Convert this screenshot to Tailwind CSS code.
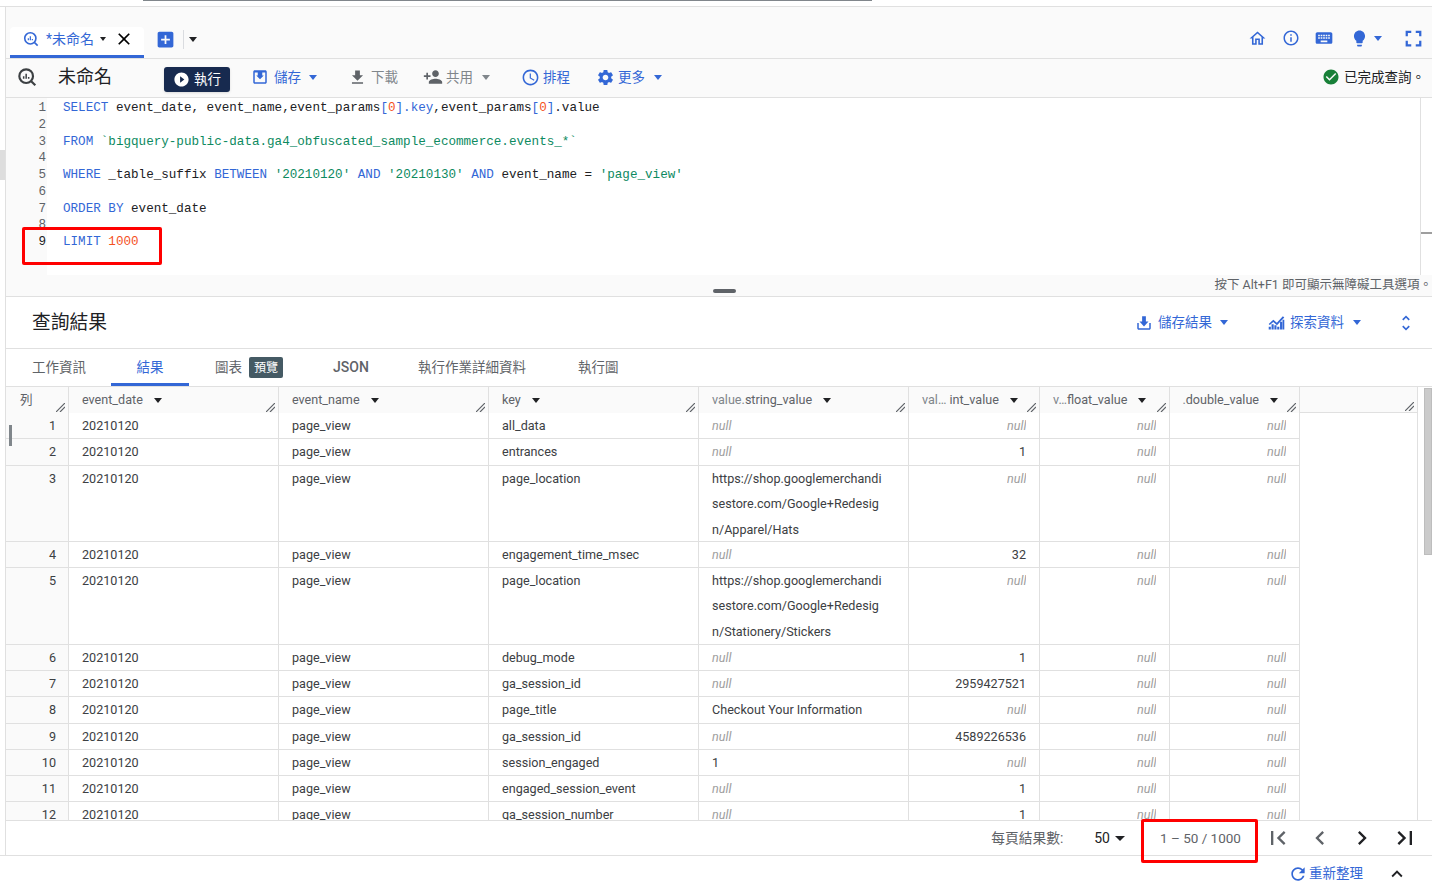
<!DOCTYPE html>
<html lang="zh-Hant">
<head>
  <meta charset="UTF-8" />
  <title>BigQuery</title>
  <script src="https://cdn.jsdelivr.net/npm/@tailwindcss/browser@4"></script>
</head>
<body class="relative w-[1432px] h-[889px] overflow-hidden bg-white text-[#3c4043] font-['Roboto','Noto_Sans_CJK_TC',sans-serif] text-[13px]">

  <!-- top strip -->
  <div class="h-[7px] border-b border-[#e0e0e0]">
    <div class="ml-[143px] w-[729px] h-px bg-[#80868b]"></div>
  </div>

  <div class="ml-[5px] border-l border-[#e0e0e0]">

    <!-- tab bar -->
    <div class="h-[52px] bg-[#fafafa] border-b border-[#e0e0e0] flex items-end pl-1 pr-[5px]">
      <div class="w-[134px] h-[31px] bg-white rounded-t border-b-[3px] border-[#3367d6] flex items-center pl-[13px] pb-[4px] text-[#3367d6]">
        <svg class="w-[16px] h-[16px]" viewBox="0 0 24 24" fill="none" stroke="currentColor" stroke-width="2.4"><circle cx="11" cy="11" r="8.4"/><path d="M17 17l5 5"/><path d="M8 14v-3M11 14V8M14 14v-2" stroke-width="1.8"/></svg>
        <span class="ml-[7px] w-[49px] text-[14px]">*未命名</span>
        <span class="ml-[5px] w-0 h-0 border-x-[3.5px] border-x-transparent border-t-[4px] border-t-[#202124]"></span>
        <svg class="ml-[8px] w-[20px] h-[20px] text-black" viewBox="0 0 24 24" fill="currentColor"><path d="M19 6.41L17.59 5 12 10.59 6.41 5 5 6.41 10.59 12 5 17.59 6.41 19 12 13.41 17.59 19 19 17.59 13.41 12z"/></svg>
      </div>
      <div class="flex items-center h-[31px] mb-[3px] ml-[11px]">
        <svg class="w-[21px] h-[21px] text-[#3367d6]" viewBox="0 0 24 24" fill="currentColor"><path d="M19 3H5c-1.11 0-2 .9-2 2v14c0 1.1.89 2 2 2h14c1.1 0 2-.9 2-2V5c0-1.1-.9-2-2-2zm-2 10h-4v4h-2v-4H7v-2h4V7h2v4h4v2z"/></svg>
        <span class="ml-[7px] w-px h-[19px] bg-[#dadce0]"></span>
        <span class="ml-[5px] w-0 h-0 border-x-[4.5px] border-x-transparent border-t-[5px] border-t-[#202124]"></span>
      </div>
      <div class="ml-auto flex items-center h-[38px] mb-[1px] text-[#3367d6]">
        <svg class="w-[19px] h-[19px]" viewBox="0 0 24 24" fill="currentColor"><path d="M12 5.69l5 4.5V18h-2v-6H9v6H7v-7.81l5-4.5M12 3L2 12h3v8h6v-6h2v6h6v-8h3L12 3z"/></svg>
        <svg class="ml-[14.500px] w-[18px] h-[18px]" viewBox="0 0 24 24" fill="currentColor"><path d="M11 7h2v2h-2zm0 4h2v6h-2zm1-9C6.48 2 2 6.48 2 12s4.48 10 10 10 10-4.48 10-10S17.52 2 12 2zm0 18c-4.41 0-8-3.59-8-8s3.59-8 8-8 8 3.59 8 8-3.59 8-8 8z"/></svg>
        <svg class="ml-[14px] w-[20px] h-[20px]" viewBox="0 0 24 24" fill="currentColor"><path d="M20 5H4c-1.1 0-1.99.9-1.99 2L2 17c0 1.1.9 2 2 2h16c1.1 0 2-.9 2-2V7c0-1.1-.9-2-2-2zm-9 3h2v2h-2V8zm0 3h2v2h-2v-2zM8 8h2v2H8V8zm0 3h2v2H8v-2zm-1 2H5v-2h2v2zm0-3H5V8h2v2zm9 7H8v-2h8v2zm0-4h-2v-2h2v2zm0-3h-2V8h2v2zm3 3h-2v-2h2v2zm0-3h-2V8h2v2z"/></svg>
        <svg class="ml-[16.500px] w-[19px] h-[19px]" viewBox="0 0 24 24" fill="currentColor"><path d="M9 21c0 .55.45 1 1 1h4c.55 0 1-.45 1-1v-1H9v1zm3-19C8.14 2 5 5.14 5 9c0 2.38 1.19 4.47 3 5.74V17c0 .55.45 1 1 1h6c.55 0 1-.45 1-1v-2.26c1.81-1.27 3-3.36 3-5.74 0-3.86-3.14-7-7-7z"/></svg>
        <span class="ml-[5px] w-0 h-0 border-x-[4.5px] border-x-transparent border-t-[5px] border-t-[#3367d6]"></span>
        <svg class="ml-[18px] w-[27px] h-[27px]" viewBox="0 0 24 24" fill="currentColor"><path d="M7 14H5v5h5v-2H7v-3zm-2-4h2V7h3V5H5v5zm12 7h-3v2h5v-5h-2v3zM14 5v2h3v3h2V5h-5z"/></svg>
      </div>
    </div>

    <!-- action bar -->
    <div class="h-[39px] bg-[#fafafa] border-b border-[#e0e0e0] flex items-center pl-[11px] pr-[7px] pb-[2px] text-[13.5px]">
      <svg class="w-[20px] h-[20px] text-[#3c4043]" viewBox="0 0 24 24" fill="none" stroke="currentColor" stroke-width="2.6"><circle cx="11" cy="11" r="8.2"/><path d="M17 17l5 5"/><path d="M8 14v-3M11 14V8M14 14v-2" stroke-width="1.8"/></svg>
      <span class="ml-[21px] w-[55px] text-[18px] leading-none text-[#202124]">未命名</span>
      <button class="ml-[51px] mt-[4px] w-[66px] h-[25px] rounded-[3px] bg-[#172a4f] text-white flex items-center pl-[9px] shadow-sm">
        <svg class="w-[17px] h-[17px]" viewBox="0 0 24 24" fill="currentColor"><path d="M12 2C6.48 2 2 6.48 2 12s4.48 10 10 10 10-4.48 10-10S17.52 2 12 2zm-2 14.5v-9l6 4.5-6 4.5z"/></svg>
        <span class="ml-[4px]">執行</span>
      </button>
      <svg class="ml-[21px] w-[18px] h-[18px] text-[#3367d6]" viewBox="0 0 24 24" fill="currentColor"><path d="M19 3H5c-1.1 0-2 .9-2 2v14c0 1.1.9 2 2 2h14c1.1 0 2-.9 2-2V5c0-1.1-.9-2-2-2zm0 16H5V6h4v4H7l5 5 5-5h-2V6h4v13z"/></svg>
      <span class="ml-[5px] w-[27px] text-[#3367d6]">儲存</span>
      <span class="ml-[8px] w-0 h-0 border-x-[4.5px] border-x-transparent border-t-[5px] border-t-[#3367d6]"></span>
      <svg class="ml-[31px] w-[19px] h-[19px] text-[#5f6368]" viewBox="0 0 24 24" fill="currentColor"><path d="M19 9h-4V3H9v6H5l7 7 7-7zM5 18v2h14v-2H5z"/></svg>
      <span class="ml-[4px] w-[27px] text-[#80868b]">下載</span>
      <svg class="ml-[25px] w-[20px] h-[20px] text-[#5f6368]" viewBox="0 0 24 24" fill="currentColor"><path d="M15 12c2.21 0 4-1.79 4-4s-1.79-4-4-4-4 1.79-4 4 1.79 4 4 4zm-9-2V7H4v3H1v2h3v3h2v-3h3v-2H6zm9 4c-2.67 0-8 1.34-8 4v2h16v-2c0-2.66-5.33-4-8-4z"/></svg>
      <span class="ml-[3px] w-[28px] text-[#80868b]">共用</span>
      <span class="ml-[8px] w-0 h-0 border-x-[4.5px] border-x-transparent border-t-[5px] border-t-[#80868b]"></span>
      <svg class="ml-[31px] w-[19px] h-[19px] text-[#3367d6]" viewBox="0 0 24 24" fill="currentColor"><path d="M11.99 2C6.47 2 2 6.48 2 12s4.47 10 9.99 10C17.52 22 22 17.52 22 12S17.52 2 11.99 2zM12 20c-4.42 0-8-3.58-8-8s3.58-8 8-8 8 3.58 8 8-3.58 8-8 8zm.5-13H11v6l5.25 3.15.75-1.23-4.5-2.67z"/></svg>
      <span class="ml-[3px] w-[28px] text-[#3367d6]">排程</span>
      <svg class="ml-[25px] w-[19px] h-[19px] text-[#3367d6]" viewBox="0 0 24 24" fill="currentColor"><path d="M19.14 12.94c.04-.3.06-.61.06-.94 0-.32-.02-.64-.07-.94l2.03-1.58a.49.49 0 0 0 .12-.61l-1.92-3.32a.488.488 0 0 0-.59-.22l-2.39.96c-.5-.38-1.03-.7-1.62-.94l-.36-2.54a.484.484 0 0 0-.48-.41h-3.84c-.24 0-.43.17-.47.41l-.36 2.54c-.59.24-1.13.57-1.62.94l-2.39-.96c-.22-.08-.47 0-.59.22L2.74 8.87c-.12.21-.08.47.12.61l2.03 1.58c-.05.3-.09.63-.09.94s.02.64.07.94l-2.03 1.58a.49.49 0 0 0-.12.61l1.92 3.32c.12.22.37.29.59.22l2.39-.96c.5.38 1.03.7 1.62.94l.36 2.54c.05.24.24.41.48.41h3.84c.24 0 .44-.17.47-.41l.36-2.54c.59-.24 1.13-.56 1.62-.94l2.39.96c.22.08.47 0 .59-.22l1.92-3.32c.12-.22.07-.47-.12-.61l-2.01-1.58zM12 15.6c-1.98 0-3.6-1.62-3.6-3.6s1.62-3.6 3.6-3.6 3.6 1.62 3.6 3.6-1.62 3.6-3.6 3.6z"/></svg>
      <span class="ml-[3px] w-[28px] text-[#3367d6]">更多</span>
      <span class="ml-[8px] w-0 h-0 border-x-[4.5px] border-x-transparent border-t-[5px] border-t-[#3367d6]"></span>
      <svg class="ml-auto w-[18px] h-[18px] text-[#188038]" viewBox="0 0 24 24" fill="currentColor"><path d="M12 2C6.48 2 2 6.48 2 12s4.48 10 10 10 10-4.48 10-10S17.52 2 12 2zm-2 15l-5-5 1.41-1.41L10 14.17l7.59-7.59L19 8l-9 9z"/></svg>
      <span class="ml-[4px] text-[#202124]">已完成查詢。</span>
    </div>

    <!-- editor -->
    <div class="h-[177px] flex">
      <pre class="w-[41px] shrink-0 bg-[#fafafa] text-right pr-[1px] pt-[2px] font-['Liberation_Mono',monospace] text-[12.6px] leading-[16.75px] text-[#5f6368]">1
2
3
4
5
6
7
8
<span class="text-[#202124]">9</span></pre>
      <pre class="flex-1 pl-[16px] pt-[2px] font-['Liberation_Mono',monospace] text-[12.6px] leading-[16.75px] text-[#202124]"><span class="text-[#3367d6]">SELECT</span> event_date, event_name,event_params<span class="text-[#3367d6]">[</span><span class="text-[#f4511e]">0</span><span class="text-[#3367d6]">].key</span>,event_params<span class="text-[#3367d6]">[</span><span class="text-[#f4511e]">0</span><span class="text-[#3367d6]">]</span>.value

<span class="text-[#3367d6]">FROM</span> <span class="text-[#0d8a5f]">`bigquery-public-data.ga4_obfuscated_sample_ecommerce.events_*`</span>

<span class="text-[#3367d6]">WHERE</span> _table_suffix <span class="text-[#3367d6]">BETWEEN</span> <span class="text-[#0d8a5f]">'20210120'</span> <span class="text-[#3367d6]">AND</span> <span class="text-[#0d8a5f]">'20210130'</span> <span class="text-[#3367d6]">AND</span> event_name = <span class="text-[#0d8a5f]">'page_view'</span>

<span class="text-[#3367d6]">ORDER BY</span> event_date

<span class="text-[#3367d6]">LIMIT</span> <span class="text-[#f4511e]">1000</span></pre>
      <div class="w-[12px] shrink-0 border-l border-[#e0e0e0] pt-[134px]">
        <div class="h-[2px] bg-[#9e9e9e]"></div>
      </div>
    </div>

    <!-- editor footer -->
    <div class="relative h-[22px] bg-[#fafafa] border-b border-[#e0e0e0] flex items-center justify-end text-[12.5px] text-[#5f6368]">
      按下 Alt+F1 即可顯示無障礙工具選項。
      <span class="absolute left-[707px] top-[14px] w-[23px] h-[4px] rounded-sm bg-[#5f6368]"></span>
    </div>

    <!-- results header -->
    <div class="h-[52px] border-b border-[#e0e0e0] flex items-center pl-[26px] pr-[16px] text-[#3367d6]">
      <span class="text-[18.75px] text-[#202124] pt-[2px]">查詢結果</span>
      <svg class="ml-auto w-[18px] h-[18px]" viewBox="0 0 24 24" fill="currentColor"><path d="M19 12v7H5v-7H3v7c0 1.1.9 2 2 2h14c1.1 0 2-.9 2-2v-7h-2zM14.5 3h-5v7H6l6 6.5 6-6.5h-3.5z"/></svg>
      <span class="ml-[5px] w-[54px] text-[13.5px]">儲存結果</span>
      <span class="ml-[8px] w-0 h-0 border-x-[4.5px] border-x-transparent border-t-[5px] border-t-[#3367d6]"></span>
      <svg class="ml-[40px] w-[17px] h-[17px]" viewBox="0 0 24 24" fill="currentColor"><path d="M1 14l6.5-6 5 4.500L21 3l2 2-10.300 11-5.200-4.800L2.500 15.500z"/><path d="M1 18h3v4H1zM5 14.500h3V22H5zM9 16h3v6H9zM13 18h3v4h-3zM17 11h3v11h-3zM20.500 8H23v14h-2.500z"/></svg>
      <span class="ml-[5px] w-[55px] text-[13.5px]">探索資料</span>
      <span class="ml-[8px] w-0 h-0 border-x-[4.5px] border-x-transparent border-t-[5px] border-t-[#3367d6]"></span>
      <svg class="ml-[35px] w-[20px] h-[20px]" viewBox="0 0 24 24" fill="currentColor"><path d="M12 5.83L15.17 9l1.41-1.41L12 3 7.41 7.59 8.83 9 12 5.83zm0 12.34L8.83 15l-1.41 1.41L12 21l4.59-4.59L15.17 15 12 18.17z"/></svg>
    </div>

    <!-- result tabs -->
    <div class="h-[38px] border-b border-[#e0e0e0] flex items-center text-[13.5px] text-[#5f6368]">
      <span class="ml-[26px] w-[54px]">工作資訊</span>
      <span class="ml-[25px] w-[78px] h-full flex items-center justify-center text-[#3367d6] border-b-[3px] border-[#3367d6] pt-[2px]">結果</span>
      <span class="ml-[26px] w-[27px]">圖表</span>
      <span class="ml-[7px] w-[34px] h-[21px] rounded-[2px] bg-[#455a64] text-white text-[12px] flex items-center justify-center">預覽</span>
      <span class="ml-[50px] w-[35px] font-medium text-[14px]">JSON</span>
      <span class="ml-[50px] w-[109px]">執行作業詳細資料</span>
      <span class="ml-[51px]">執行圖</span>
    </div>

    <!-- table -->
    <div class="h-[433px] flex">
      <div id="table" class="w-[1294px] shrink-0 h-full overflow-hidden"></div>
      <div class="w-[118px] shrink-0 h-full border-r border-[#e0e0e0]">
        <div class="relative h-[26px] bg-[#fafafa] border-b border-[#e0e0e0]">
          <svg class="absolute right-[3px] bottom-[1px] w-[9px] h-[9px] text-[#5f6368]" viewBox="0 0 9 9" fill="none" stroke="currentColor" stroke-width="1.2"><path d="M0 9l9-9M4 9l5-5"/></svg>
        </div>
      </div>
      <div class="flex-1 pl-[6px] pt-px">
        <div class="h-[167px] bg-[#cbcbcb] border border-[#bdbdbd]"></div>
      </div>
    </div>

    <!-- pager -->
    <div class="h-[36px] border-y border-[#e0e0e0] flex items-center pr-[13px] text-[#5f6368]">
      <span class="ml-auto text-[13.75px]">每頁結果數:</span>
      <span class="ml-[31px] text-[14px] text-[#202124]">50</span>
      <span class="ml-[5px] w-0 h-0 border-x-[5px] border-x-transparent border-t-[5px] border-t-[#202124]"></span>
      <span class="ml-[35px] w-[81px] text-[13.5px] whitespace-nowrap">1 – 50 / 1000</span>
      <svg class="ml-[23px] w-[28px] h-[28px] text-[#5f6368]" viewBox="0 0 24 24" fill="currentColor"><path d="M18.41 16.59L13.82 12l4.59-4.59L17 6l-6 6 6 6zM6 6h2v12H6z"/></svg>
      <svg class="ml-[14px] w-[28px] h-[28px] text-[#5f6368]" viewBox="0 0 24 24" fill="currentColor"><path d="M15.41 7.41L14 6l-6 6 6 6 1.41-1.41L10.83 12z"/></svg>
      <svg class="ml-[14px] w-[28px] h-[28px] text-[#202124]" viewBox="0 0 24 24" fill="currentColor"><path d="M10 6L8.59 7.41 13.17 12l-4.58 4.59L10 18l6-6z"/></svg>
      <svg class="ml-[15px] w-[28px] h-[28px] text-[#202124]" viewBox="0 0 24 24" fill="currentColor"><path d="M5.59 7.41L10.18 12l-4.59 4.59L7 18l6-6-6-6zM16 6h2v12h-2z"/></svg>
    </div>
  </div>

  <!-- bottom bar -->
  <div class="h-[33px] border-t border-[#e0e0e0] -mt-px flex items-center justify-end pr-[24px] pt-[3px] text-[#3367d6]">
    <svg class="w-[20px] h-[20px]" viewBox="0 0 24 24" fill="currentColor"><path d="M17.65 6.35C16.2 4.9 14.21 4 12 4c-4.42 0-7.99 3.58-7.99 8s3.57 8 7.99 8c3.73 0 6.84-2.55 7.73-6h-2.08c-.82 2.33-3.04 4-5.65 4-3.31 0-6-2.69-6-6s2.69-6 6-6c1.66 0 3.14.69 4.22 1.78L13 11h7V4l-2.35 2.35z"/></svg>
    <span class="ml-[1px] w-[54px] text-[13.5px]">重新整理</span>
    <svg class="ml-[23px] w-[22px] h-[22px] text-[#202124]" viewBox="0 0 24 24" fill="currentColor"><path d="M12 8l-6 6 1.41 1.41L12 10.83l4.59 4.58L18 14z"/></svg>
  </div>

  <!-- side slivers and highlight boxes that lie over the page -->
  <div class="absolute left-0 top-[150px] w-[5px] h-[30px] bg-[#dddddd]"></div>
  <div class="absolute left-[9px] top-[425px] w-[3px] h-[21px] bg-[#80868b]"></div>
  <div class="absolute left-[22px] top-[227px] w-[140px] h-[38px] border-[3.5px] border-[#ff0000] rounded-[2px]"></div>
  <div class="absolute left-[1141px] top-[819px] w-[117px] h-[44px] border-[3.5px] border-[#ff0000] rounded-[2px]"></div>

  <script>
    const resize = '<svg class="absolute right-[3px] bottom-[1px] w-[9px] h-[9px] text-[#5f6368]" viewBox="0 0 9 9" fill="none" stroke="currentColor" stroke-width="1.2"><path d="M0 9l9-9M4 9l5-5"/></svg>';
    const arrow = '<span class="ml-[11px] w-0 h-0 border-x-[4.5px] border-x-transparent border-t-[5px] border-t-[#202124]"></span>';
    const widths = ['w-[63px]', 'w-[210px]', 'w-[210px]', 'w-[210px]', 'w-[210px]', 'w-[131px]', 'w-[130px]', 'w-[130px]'];

    const headers = [
      '<span class="ml-[1px]">列</span>',
      '<span>event_date</span>' + arrow,
      '<span>event_name</span>' + arrow,
      '<span>key</span>' + arrow,
      '<span><span class="text-[#80868b]">value.</span>string_value</span>' + arrow,
      '<span><span class="text-[#80868b]">val…</span> int_value</span>' + arrow,
      '<span><span class="text-[#80868b]">v…</span>float_value</span>' + arrow,
      '<span class="w-[76px] overflow-hidden whitespace-nowrap flex justify-end"><span class="shrink-0"><span class="text-[#80868b]">value.</span>double_value</span></span>' + arrow
    ];

    // height class, key, string value, int value per row
    const url1 = 'https://shop.googlemerchandi<br>sestore.com/Google+Redesig<br>n/Apparel/Hats';
    const url2 = 'https://shop.googlemerchandi<br>sestore.com/Google+Redesig<br>n/Stationery/Stickers';
    const rows = [
      ['h-[26px]', 'all_data', null, null],
      ['h-[27px]', 'entrances', null, '1'],
      ['h-[76px]', 'page_location', url1, null],
      ['h-[26px]', 'engagement_time_msec', null, '32'],
      ['h-[77px]', 'page_location', url2, null],
      ['h-[26px]', 'debug_mode', null, '1'],
      ['h-[26px]', 'ga_session_id', null, '2959427521'],
      ['h-[27px]', 'page_title', 'Checkout Your Information', null],
      ['h-[26px]', 'ga_session_id', null, '4589226536'],
      ['h-[26px]', 'session_engaged', '1', null],
      ['h-[26px]', 'engaged_session_event', null, '1'],
      ['h-[26px]', 'ga_session_number', null, '1']
    ];

    const nullLeft = '<span class="italic text-[#9e9e9e]">null</span>';
    const nullRight = '<span class="inline-block w-[19px] overflow-hidden italic text-[#9e9e9e] text-left align-bottom">null</span>';

    let html = '<div class="flex h-[26px]">' + headers.map((h, i) =>
      `<div class="relative ${widths[i]} shrink-0 h-full bg-[#fafafa] border-r border-[#e0e0e0] flex items-center pl-[13px] text-[12.6px] text-[#5f6368]">${h}${resize}</div>`
    ).join('') + '</div>';

    rows.forEach((r, n) => {
      const cell = (w, body, cls) => `<div class="${w} shrink-0 h-full border-r border-[#e0e0e0] overflow-hidden text-[12.6px] leading-[25.3px] ${cls}">${body}</div>`;
      html += `<div class="flex ${r[0]} border-b border-[#e0e0e0]">`
        + cell(widths[0], n + 1, 'bg-[#fafafa] text-right pr-[12px]')
        + cell(widths[1], '20210120', 'pl-[13px]')
        + cell(widths[2], 'page_view', 'pl-[13px]')
        + cell(widths[3], r[1], 'pl-[13px]')
        + cell(widths[4], r[2] === null ? nullLeft : r[2], 'pl-[13px]')
        + cell(widths[5], r[3] === null ? nullRight : r[3], 'text-right pr-[13px]')
        + cell(widths[6], nullRight, 'text-right pr-[13px]')
        + cell(widths[7], nullRight, 'text-right pr-[13px]')
        + '</div>';
    });
    document.getElementById('table').innerHTML = html;
  </script>
</body>
</html>
